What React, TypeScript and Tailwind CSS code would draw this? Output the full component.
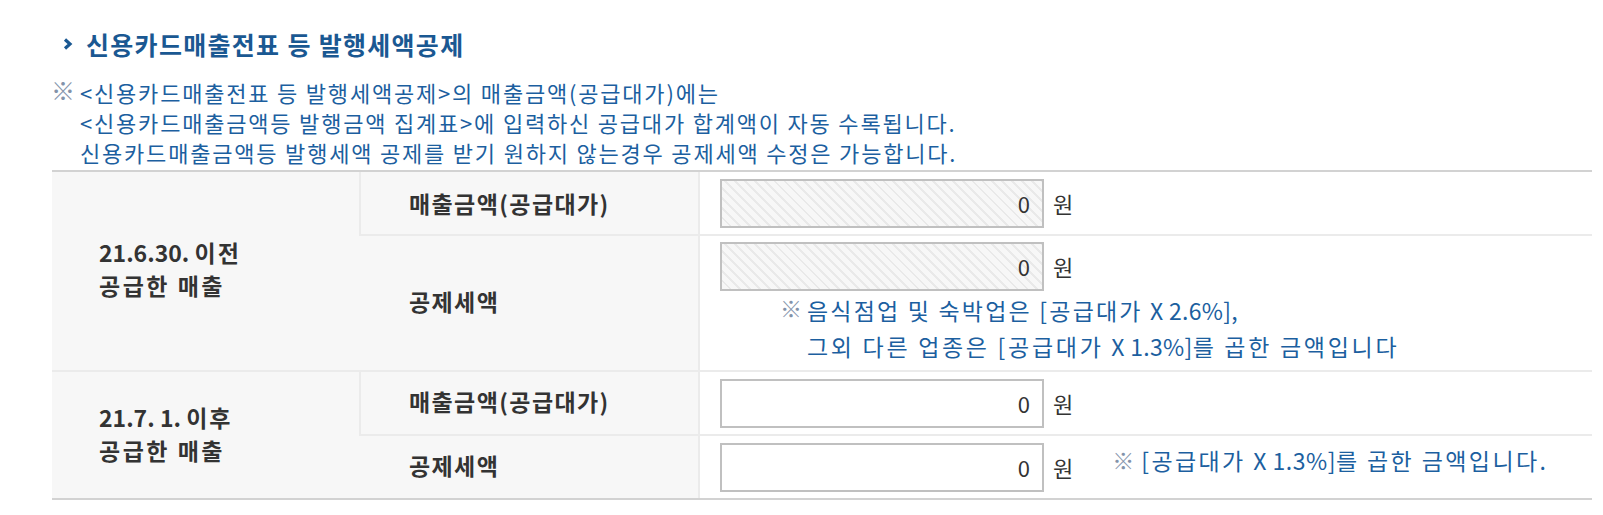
import React from "react";

const blue = "text-[#1c5f9f]";

function Won({ value, disabled }: { value: string; disabled?: boolean }) {
  return (
    <div className="flex items-center">
      <div
        className={
          "w-[324px] h-[49px] border-2 border-[#c0c0c0] flex items-center justify-end pr-[12px] text-[22px] text-[#333] " +
          (disabled
            ? "bg-[repeating-linear-gradient(45deg,#f7f7f7_0px,#f7f7f7_5px,#e9e9e9_5px,#e9e9e9_7px)]"
            : "bg-white")
        }
      >
        {value}
      </div>
      <span className="ml-[9px] text-[22px] text-[#333]">원</span>
    </div>
  );
}

// ※ mark
function Mark({ small }: { small?: boolean }) {
  return (
    <span className={"text-[#8393aa] leading-none " + (small ? "text-[22px]" : "text-[24px]")}>※</span>
  );
}

export default function App() {
  return (
    <div className="w-[1603px] h-[515px] bg-white font-['Noto_Sans_CJK_KR','Noto_Sans',sans-serif] overflow-hidden">
      {/* title */}
      <div className="flex items-center pl-[63px] pt-[29px] h-[59px]">
        <svg width="10" height="12" viewBox="0 0 10 12" className="mr-[13px]">
          <path d="M2 1.5 L7 6 L2 10.5" fill="none" stroke="#1a5892" strokeWidth="3.2" />
        </svg>
        <h2 className="text-[25px] font-bold tracking-[1.3px] text-[#1a5892] leading-[30px]">
          신용카드매출전표 등 발행세액공제
        </h2>
      </div>

      {/* notes */}
      <div className="flex mt-[18px] pl-[51px]">
        <div className="w-[29px] h-[30px] flex items-center -mt-[2px]">
          <Mark />
        </div>
        <div className={"text-[22px] tracking-[1.8px] leading-[30px] " + blue}>
          <p>&lt;신용카드매출전표 등 발행세액공제&gt;의 매출금액(공급대가)에는</p>
          <p>&lt;신용카드매출금액등 발행금액 집계표&gt;에 입력하신 공급대가 합계액이 자동 수록됩니다.</p>
          <p>신용카드매출금액등 발행세액 공제를 받기 원하지 않는경우 공제세액 수정은 가능합니다.</p>
        </div>
      </div>

      {/* table */}
      <div className="ml-[52px] mt-[3px] w-[1540px] grid grid-cols-[307px_339px_894px] grid-rows-[64px_136px_64px_62px] border-t-2 border-b-2 border-[#d2d2d2] text-[#333]">
        <div className="row-span-2 bg-[#f7f7f7] border-b-2 border-[#ebebeb] flex flex-col justify-center pl-[47px] pb-[5px] text-[23px] font-bold leading-[33px]">
          <span>
            21.6.30. <span className="tracking-[2px]">이전</span>
          </span>
          <span className="tracking-[2.5px]">공급한 매출</span>
        </div>
        <div className="bg-[#f7f7f7] border-l-2 border-b-2 border-[#ebebeb] flex items-center pl-[48px] text-[23px] tracking-[1.4px] font-bold">
          매출금액(공급대가)
        </div>
        <div className="border-l-2 border-b-2 border-[#ebebeb] flex items-center pl-[20px]">
          <Won value="0" disabled />
        </div>

        <div className="bg-[#f7f7f7] border-b-2 border-[#ebebeb] flex items-center pl-[50px] pb-[3px] text-[23px] tracking-[1.4px] font-bold">
          공제세액
        </div>
        <div className="border-l-2 border-b-2 border-[#ebebeb] pl-[20px] pt-[6px]">
          <Won value="0" disabled />
          <div className="flex pl-[60px] mt-[1px] leading-[36px]">
            <div className="w-[27px] h-[36px] flex items-center -mt-[3px]">
              <Mark small />
            </div>
            <div className={"text-[23px] " + blue}>
              <p className="tracking-[2.2px]">
                음식점업 및 숙박업은 [공급대가 <span className="tracking-[0.3px]">X 2.6%],</span>
              </p>
              <p className="tracking-[2.7px]">
                그외 다른 업종은 [공급대가 <span className="tracking-[0.3px]">X 1.3%]</span>를 곱한 금액입니다
              </p>
            </div>
          </div>
        </div>

        <div className="row-span-2 bg-[#f7f7f7] flex flex-col justify-center pl-[47px] pb-[2px] text-[23px] font-bold leading-[33px]">
          <span>
            21.7. 1. <span className="tracking-[2px]">이후</span>
          </span>
          <span className="tracking-[2.5px]">공급한 매출</span>
        </div>
        <div className="bg-[#f7f7f7] border-l-2 border-b-2 border-[#ebebeb] flex items-center pl-[48px] pb-[3px] text-[23px] tracking-[1.4px] font-bold">
          매출금액(공급대가)
        </div>
        <div className="border-l-2 border-b-2 border-[#ebebeb] flex items-center pl-[20px]">
          <Won value="0" />
        </div>

        <div className="bg-[#f7f7f7] flex items-center pl-[50px] pb-[3px] text-[23px] tracking-[1.4px] font-bold">
          공제세액
        </div>
        <div className="border-l-2 border-[#ebebeb] flex items-center pl-[20px]">
          <Won value="0" />
          <div className="flex items-center ml-[39px] mb-[14px] leading-[30px]">
            <div className="w-[29px] h-[30px] flex items-center -mt-[2px]">
              <Mark small />
            </div>
            <span className={"text-[23px] tracking-[2.4px] " + blue}>
              [공급대가 <span className="tracking-[0.5px]">X 1.3%]</span>를 곱한 금액입니다.
            </span>
          </div>
        </div>
      </div>
    </div>
  );
}
